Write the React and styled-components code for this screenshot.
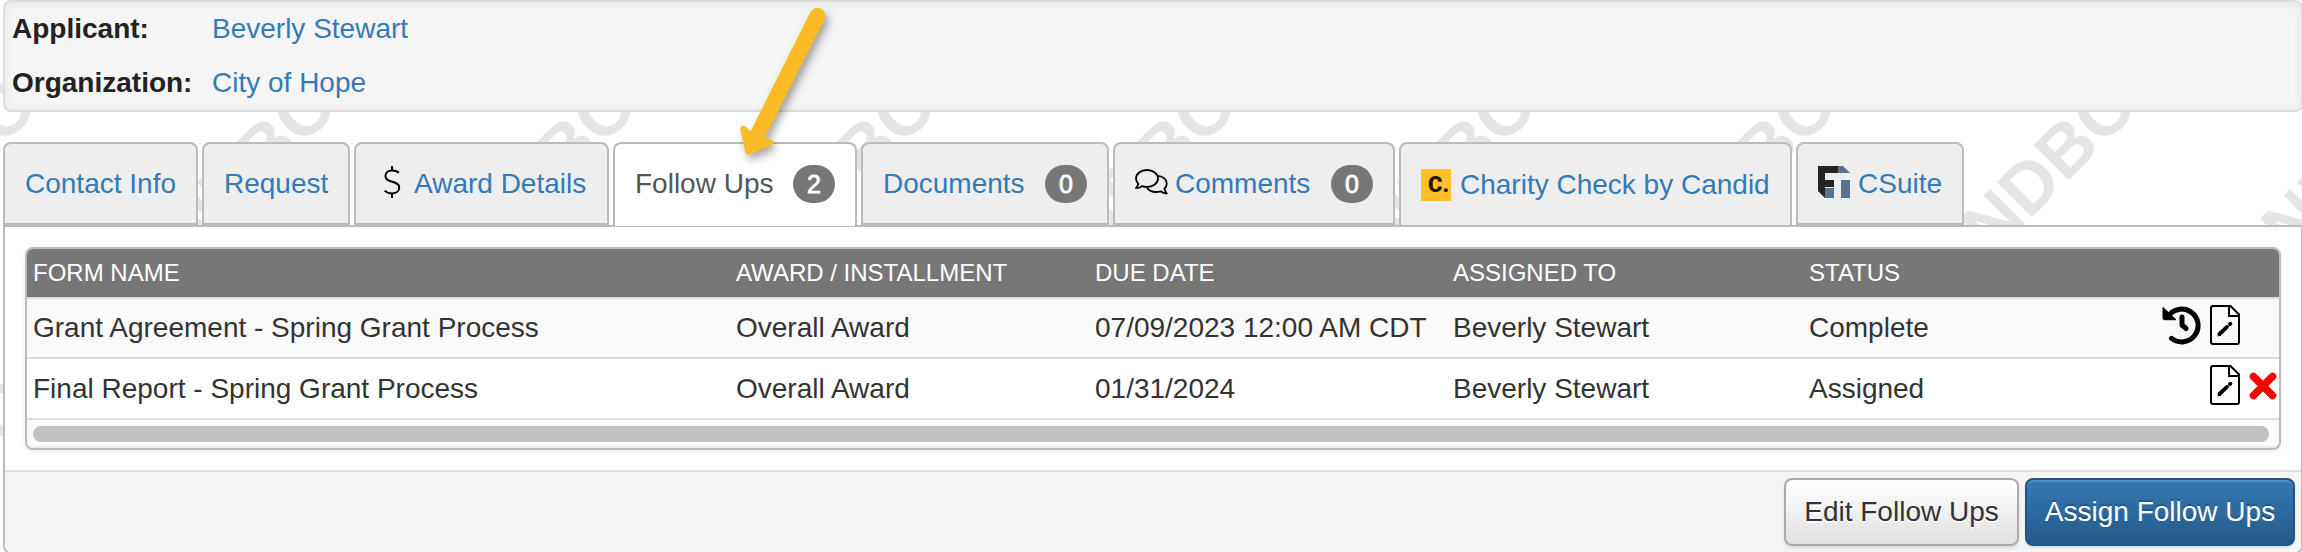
import React from "react";
import styled, { createGlobalStyle, css } from "styled-components";

const GlobalStyle = createGlobalStyle`
  * {
    box-sizing: border-box;
  }

  body {
    margin: 0;
    overflow: hidden;
    background: #fff;
    color: #333;
    font-family: "Liberation Sans", Arial, sans-serif;
    font-size: 28px;
    line-height: 40px;
  }
`;

const COLUMNS = ["Form Name", "Award / Installment", "Due Date", "Assigned To", "Status"];

const FOLLOW_UPS = [
  {
    id: 1,
    cells: [
      "Grant Agreement - Spring Grant Process",
      "Overall Award",
      "07/09/2023 12:00 AM CDT",
      "Beverly Stewart",
      "Complete",
    ],
    hasHistory: true,
  },
  {
    id: 2,
    cells: [
      "Final Report - Spring Grant Process",
      "Overall Award",
      "01/31/2024",
      "Beverly Stewart",
      "Assigned",
    ],
    canDelete: true,
  },
];

const DollarIcon = () => (
  <svg width="32" height="34" viewBox="0 0 32 34" fill="none" stroke="#000" strokeWidth="2">
    <path d="M16 1v4.500M16 28.500v4.500" />
    <path d="M22.800 7.600C20.800 6 18.400 5.500 16.200 5.500c-4 0-6.800 2.200-6.800 5.400 0 7.600 13.800 4.200 13.800 11.600 0 3.600-3 5.900-7 5.900-2.800 0-5.600-.9-7.600-2.800" />
  </svg>
);

const CommentsIcon = () => (
  <svg width="33" height="26" viewBox="0 0 33 26" fill="none" stroke="#000" strokeWidth="1.800" strokeLinejoin="round">
    <path d="M12 1C5.800 1 1 4.800 1 9.500c0 2 .9 3.800 2.400 5.300C3 16.600 1.800 18 1 19.200c2.600 0 4.600-.9 6-2.100 1.500.5 3.200.8 5 .8 6.100 0 11-3.800 11-8.400S18.100 1 12 1z" />
    <path d="M23.200 6.800c5 .5 8.600 3.800 8.600 7.800 0 2-.9 3.800-2.400 5.300.4 1.800 1.500 3.300 2.400 4.600-2.600 0-4.800-1-6.200-2.200-1.500.5-3 .7-4.600.7-4.200 0-7.800-2-9.400-5" />
  </svg>
);

const CSuiteIcon = () => (
  <svg width="32" height="32" viewBox="0 0 32 32">
    <path fill="#25241f" d="M0 0h20v7H7v7h9v7H7v11L0 25z" />
    <path fill="#58718c" d="M20 0h5l7 7H20zM7 22h9v10H7zM23 14h9v18h-9z" />
  </svg>
);

const HistoryIcon = () => (
  <svg width="39" height="40" viewBox="0 0 39 40">
    <path d="M1 2.500v10.700c0 .9.600 1.500 1.500 1.500H14z" stroke="#000" strokeLinejoin="round" />
    <path
      d="M6 11.500A16.400 16.400 0 1 1 9.500 33.400M20 12v8l4 3.500"
      fill="none"
      stroke="#000"
      strokeWidth="5"
      strokeLinecap="round"
      strokeLinejoin="round"
    />
  </svg>
);

const EditFileIcon = () => (
  <svg width="30" height="40" viewBox="0 0 30 40" fill="none" stroke="#000" strokeWidth="2">
    <path d="M3 1h17.500L29 9.500V37a2 2 0 0 1-2 2H3a2 2 0 0 1-2-2V3a2 2 0 0 1 2-2z" />
    <path d="M19 1v10h10" />
    <path d="M9.500 29L17 21.900" strokeWidth="3.800" strokeLinecap="round" />
    <path d="M7.500 31.500l.8-4 3 3z" fill="#000" stroke="none" />
    <path d="M19.900 19.200L20.400 18.700" strokeWidth="3.800" strokeLinecap="round" />
  </svg>
);

const DeleteIcon = () => (
  <svg width="28" height="28" viewBox="0 0 28 28">
    <path d="M4.500 4.500l19 19M23.500 4.500l-19 19" stroke="#f00" strokeWidth="7.500" strokeLinecap="round" />
  </svg>
);

const WatermarkLayer = styled.svg`
  position: absolute;
  top: 0;
  left: 0;
  z-index: -1;
  fill: #e5e5e5;
  font-size: 72px;
  font-weight: bold;
`;

// repeats every 300px in both directions
const Watermark = () => (
  <WatermarkLayer width="2302" height="552" aria-hidden="true">
    {[328, 628].map((y) =>
      Array.from({ length: 9 }, (_, i) => i * 300 - 179).map((x) => (
        <text key={`${x}-${y}`} transform={`translate(${x} ${y}) rotate(-45)`}>
          SANDBOX
        </text>
      ))
    )}
  </WatermarkLayer>
);

const PointerLayer = styled.svg`
  position: absolute;
  top: 0;
  left: 720px;
  z-index: 2;
  filter: drop-shadow(3px 5px 4px rgba(0, 0, 0, 0.35));
`;

const Pointer = () => (
  <PointerLayer width="120" height="170" viewBox="720 0 120 170" fill="#fbbb27">
    <path
      d="M810.300 12.300a8 8 0 0 1 14.300 7.300L764.500 138.500l6.500 1a3 3 0 0 1 .8 5.500L749.500 154.600a3 3 0 0 1-4-2.200L740.200 129a3 3 0 0 1 5.200-2.400L750.500 131.500z"
    />
  </PointerLayer>
);

const Page = styled.div`
  position: relative;
  z-index: 0;
  width: 2302px;
  height: 552px;
  padding-left: 3px;
  overflow: hidden;
`;

const Summary = styled.dl`
  display: grid;
  grid-template-columns: 193px 1fr;
  grid-auto-rows: 54px;
  width: 2300px;
  height: 112px;
  margin: 0;
  padding: 0 7px;
  background: #f5f5f5;
  border: 2px solid #ddd;
  border-radius: 8px;
  box-shadow: inset 0 2px 12px rgba(0, 0, 0, 0.06);
  line-height: 53px;

  & dt {
    color: #222;
    font-weight: bold;
  }

  & dd {
    margin: 0 0 0 7px;
  }
`;

const Link = styled.a`
  color: #337ab7;
`;

const Tabs = styled.nav`
  display: flex;
  gap: 4px;
  height: 83px;
  margin-top: 30px;
`;

const Tab = styled.a`
  display: flex;
  align-items: center;
  flex-shrink: 0;
  width: ${({ $width }) => $width}px;
  padding: 0 20px;
  background: #eee;
  border: 2px solid #bbb;
  border-bottom-width: ${({ $low }) => ($low ? 0 : 2)}px;
  border-radius: 8px 8px 0 0;
  color: #337ab7;
  white-space: nowrap;

  ${({ $active }) =>
    $active &&
    css`
      height: 84px;
      padding-bottom: 3px;
      background: #fff;
      border-bottom: 0;
      color: #555;
      z-index: 1;
    `}

  & svg {
    flex-shrink: 0;
    margin: 0 ${({ $iconGap = 8 }) => $iconGap}px 3px 0;
  }
`;

const Badge = styled.span`
  width: 42px;
  height: 38px;
  margin-left: auto;
  background: #777;
  border-radius: 19px;
  color: #fff;
  font-size: 25px;
  line-height: 38px;
  text-align: center;
  -webkit-text-stroke: 0.8px #fff;
`;

const CandidLogo = styled.span`
  width: 30px;
  height: 32px;
  margin-right: 9px;
  padding-left: 7px;
  background: #ffbf2d;
  color: #1d1600;
  font-family: Roboto, "Liberation Sans", sans-serif;
  font-size: 22px;
  font-weight: 900;
  line-height: 32px;
`;

const Panel = styled.section`
  width: 2300px;
  height: 329px;
  background: #fff;
  border: 2px solid #bbb;
  border-radius: 0 0 8px 8px;
  overflow: hidden;
`;

const TableBox = styled.div`
  width: 2256px;
  height: 203px;
  margin: 20px 0 0 20px;
  overflow: hidden;
  background: #fafafa;
  border: 2px solid #bbb;
  border-radius: 8px;
  box-shadow: 0 2px 4px rgba(0, 0, 0, 0.08);
`;

const Row = styled.div`
  display: grid;
  grid-template-columns: 703px 359px 358px 356px 1fr auto;
  align-items: center;
  height: ${({ $height }) => $height}px;
  padding: 0 2px 0 6px;
  background: ${({ $background }) => $background};
  border-bottom: 2px solid #ddd;
  white-space: nowrap;
`;

const HeadRow = styled(Row)`
  height: 50px;
  background: #777;
  color: #fff;
  font-size: 24px;
  text-transform: uppercase;
`;

const Actions = styled.div`
  display: grid;
  grid-template-columns: 39px 30px 28px;
  column-gap: 9px;
  align-items: center;
  align-self: start;
  height: 40px;
  margin-top: 6px;
`;

const ActionSlot = styled.span`
  display: flex;
  padding-top: ${({ $drop = 0 }) => $drop}px;
`;

const Scrollbar = styled.div`
  height: 28px;
  padding: 6px 10px 0 6px;
  border-bottom: 2px solid #ededed;
`;

const ScrollThumb = styled.div`
  height: 16px;
  background: #c1c1c1;
  border-radius: 8px;
`;

const Footer = styled.footer`
  display: flex;
  justify-content: flex-end;
  gap: 6px;
  height: 84px;
  margin-top: 20px;
  padding: 6px 6px 0 0;
  background: #f4f4f4;
  border-top: 2px solid #ddd;
`;

const Button = styled.button`
  width: ${({ $width }) => $width}px;
  height: 68px;
  padding: 0;
  background: linear-gradient(#fff, #e0e0e0);
  border: 2px solid #aaa;
  border-radius: 8px;
  box-shadow: 0 2px 3px rgba(0, 0, 0, 0.1);
  color: #333;
  font: inherit;
  text-shadow: 0 2px 0 #fff;

  ${({ $primary }) =>
    $primary &&
    css`
      background: linear-gradient(#337ab7, #265a88);
      border-color: #245580;
      box-shadow:
        inset 0 2px 0 rgba(255, 255, 255, 0.15),
        0 2px 2px rgba(0, 0, 0, 0.075);
      color: #fff;
      text-shadow: 0 -2px 0 rgba(0, 0, 0, 0.2);
    `}
`;

const FollowUpRow = ({ cells, hasHistory, canDelete, ...rest }) => (
  <Row {...rest}>
    {cells.map((cell, index) => (
      <span key={COLUMNS[index]}>{cell}</span>
    ))}
    <Actions>
      <ActionSlot>{hasHistory && <HistoryIcon />}</ActionSlot>
      <ActionSlot>
        <EditFileIcon />
      </ActionSlot>
      <ActionSlot $drop={2}>{canDelete && <DeleteIcon />}</ActionSlot>
    </Actions>
  </Row>
);

const App = () => (
  <>
    <GlobalStyle />
    <Page>
      <Watermark />
      <Pointer />
      <Summary>
        <dt>Applicant:</dt>
        <dd>
          <Link>Beverly Stewart</Link>
        </dd>
        <dt>Organization:</dt>
        <dd>
          <Link>City of Hope</Link>
        </dd>
      </Summary>

      <Tabs>
        <Tab $width={195}>Contact Info</Tab>
        <Tab $width={148}>Request</Tab>
        <Tab $width={255} $iconGap={6}>
          <DollarIcon />
          Award Details
        </Tab>
        <Tab $width={244} $active>
          Follow Ups
          <Badge>2</Badge>
        </Tab>
        <Tab $width={248}>
          Documents
          <Badge>0</Badge>
        </Tab>
        <Tab $width={282} $iconGap={7}>
          <CommentsIcon />
          Comments
          <Badge>0</Badge>
        </Tab>
        <Tab $width={393} $low>
          <CandidLogo>C.</CandidLogo>
          Charity Check by Candid
        </Tab>
        <Tab $width={168}>
          <CSuiteIcon />
          CSuite
        </Tab>
      </Tabs>

      <Panel>
        <TableBox>
          <HeadRow>
            {COLUMNS.map((title) => (
              <span key={title}>{title}</span>
            ))}
          </HeadRow>
          {FOLLOW_UPS.map(({ id, ...followUp }, index) => (
            <FollowUpRow
              key={id}
              {...followUp}
              $height={index ? 61 : 60}
              $background={index ? "#fff" : "#f9f9f9"}
            />
          ))}
          <Scrollbar>
            <ScrollThumb />
          </Scrollbar>
        </TableBox>
        <Footer>
          <Button $width={235}>Edit Follow Ups</Button>
          <Button $width={270} $primary>
            Assign Follow Ups
          </Button>
        </Footer>
      </Panel>
    </Page>
  </>
);

export default App;
